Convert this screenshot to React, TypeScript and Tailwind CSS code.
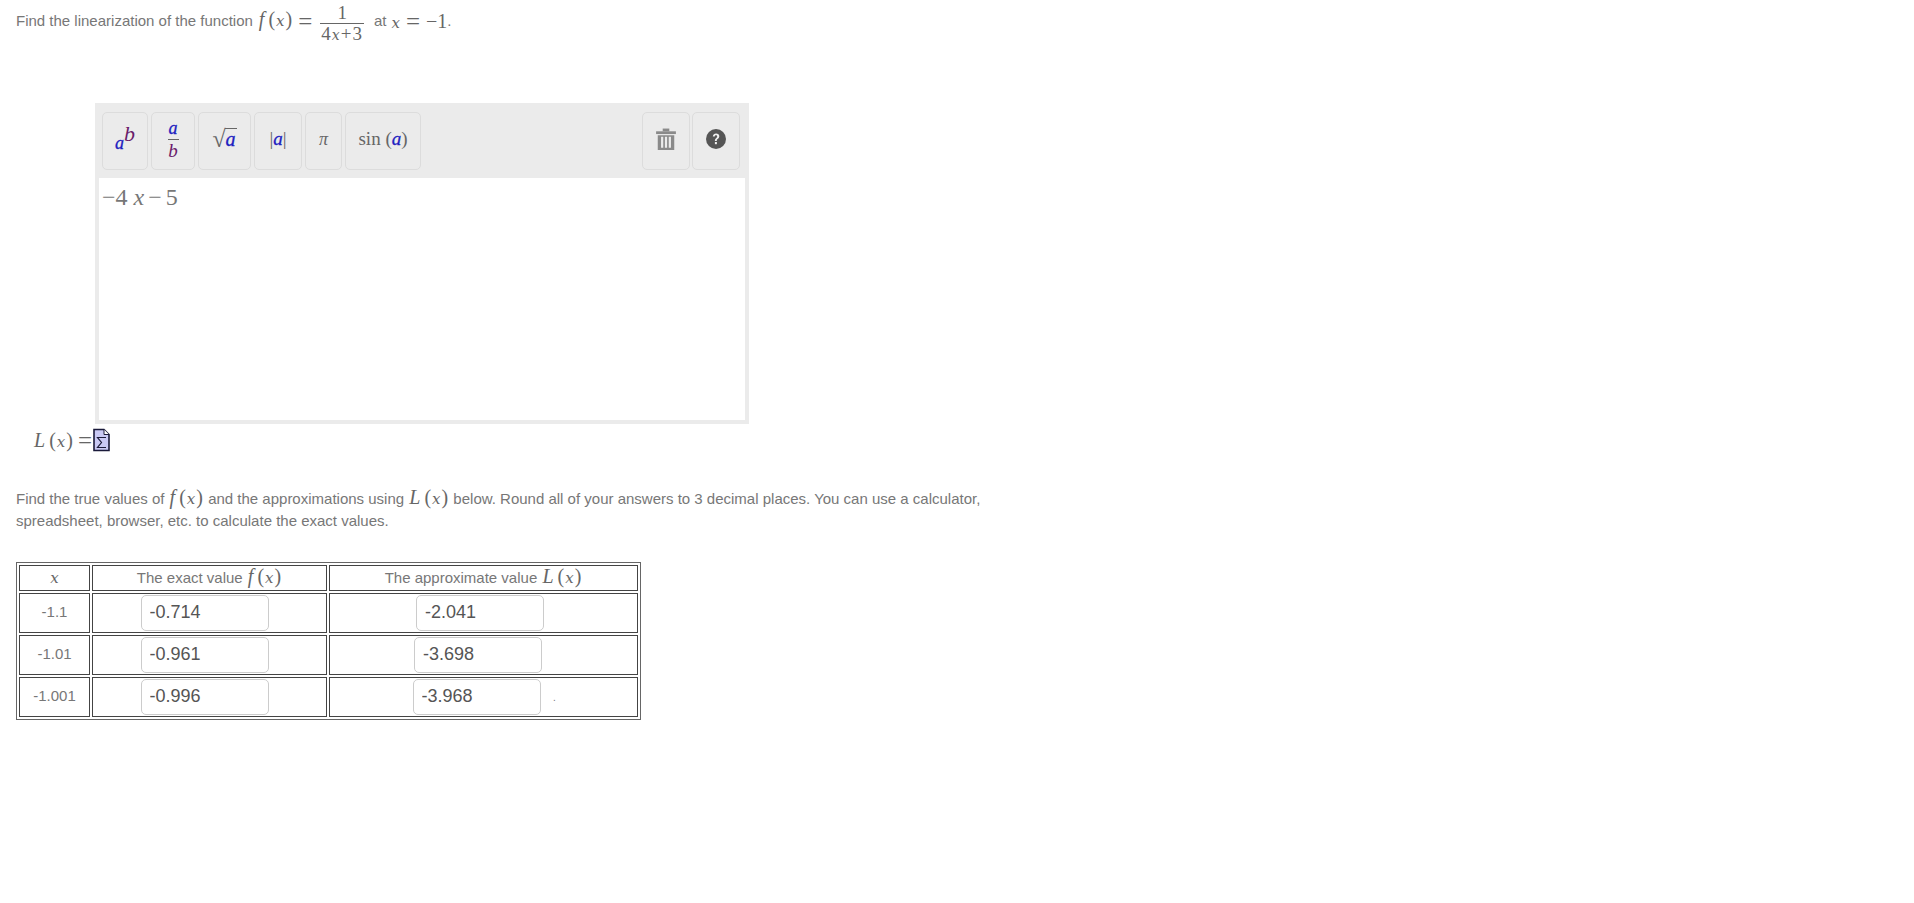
import React from 'react';

const mathFont = "font-['Liberation_Serif','Times_New_Roman',serif]";

const MathText: React.FC<{ children: React.ReactNode; className?: string }> = ({ children, className = '' }) => (
    <span className={`${mathFont} text-[20px] leading-none text-[#666] ${className}`}>{children}</span>
);

const X: React.FC<{ className?: string }> = ({ className = 'text-[15px]' }) => (
    <i className={`font-['DejaVu_Serif',serif] ${className}`}>x</i>
);

const Equals: React.FC<{ className?: string }> = ({ className = '' }) => (
    <span className={`${mathFont} text-[25px] leading-none text-[#666] ${className}`}>=</span>
);

const Fx: React.FC<{ name: string }> = ({ name }) => (
    <MathText className="mx-[1px]">
        <i>{name}</i>
        <span className="ml-[4px]">(</span>
        <span className="mx-[1px]"><X /></span>
        <span>)</span>
    </MathText>
);

const A = () => <i className="text-[#2020c0] [-webkit-text-stroke:0.3px_#2020c0]">a</i>;

const ToolButton: React.FC<{ className: string; children: React.ReactNode }> = ({ className, children }) => (
    <button className={`h-[58px] rounded-[5px] border border-[#dcdcdc] bg-[#ebebeb] flex items-center justify-center pb-[4px] ${mathFont} text-[#666] ${className}`}>
        {children}
    </button>
);

const TrashIcon = () => (
    <svg width="20" height="22" viewBox="0 0 18 20" fill="#8a8a8a">
        <path d="M0 3h18v2.5H0z" />
        <path d="M6 .5h6V3H6z" />
        <path d="M1.5 6.5h15V20h-15zM4.5 8v10h2V8zM8 8v10h2V8zM11.5 8v10h2V8z" fillRule="evenodd" />
    </svg>
);

const HelpIcon = () => (
    <svg width="20" height="20" viewBox="0 0 20 20">
        <circle cx="10" cy="10" r="10" fill="#555" />
        <path d="M6.8 7.6C7 5.5 8.4 4.6 10.1 4.6c1.9 0 3.2 1.1 3.2 2.7 0 2.4-2.5 2.4-2.5 4.6H8.9c0-3 2.3-3 2.3-4.5 0-.7-.5-1.1-1.2-1.1-.8 0-1.2.5-1.3 1.3z" fill="#eee" />
        <rect x="8.9" y="13" width="2" height="2.2" fill="#eee" />
    </svg>
);

const DocIcon = () => (
    <svg width="17" height="24" viewBox="0 0 17 23">
        <path d="M1 1h10l5 5v16H1z" fill="#c9c9f5" stroke="#1a1a3a" strokeWidth="1.6" />
        <path d="M11 1v5h5" fill="#fff" stroke="#1a1a3a" strokeWidth="1" />
        <path d="M13 9H4.5l4 5-4 5H13" fill="none" stroke="#1a1a3a" strokeWidth="1.2" />
    </svg>
);

const cell = 'border border-[#444] p-0 text-center align-middle';

const rows = [
    { x: '-1.1', exact: '-0.714', approx: '-2.041', trail: 'w-[7px]', dot: false },
    { x: '-1.01', exact: '-0.961', approx: '-3.698', trail: 'w-[11px]', dot: false },
    { x: '-1.001', exact: '-0.996', approx: '-3.968', trail: 'w-[14px]', dot: true },
];

const AnswerInput: React.FC<{ value: string }> = ({ value }) => (
    <input
        readOnly
        value={value}
        className="block w-[128px] h-[36px] rounded-[5px] border border-[#ccc] px-[8px] text-[18px] text-[#555] outline-none"
    />
);

export default function App() {
    return (
        <div className="min-h-[903px] bg-white pl-4 pt-[3px] font-['Liberation_Sans',Arial,sans-serif] text-[15px] text-[#777]">
            <div className="flex items-center h-[36px]">
                <span>Find the linearization of the function</span>
                <span className="ml-[5px]"><Fx name="f" /></span>
                <Equals className="mx-[5px]" />
                <span className={`inline-flex flex-col items-center mx-[3px] mt-[5px] ${mathFont} text-[19px] leading-[20px] text-[#666]`}>
                    <span>1</span>
                    <span className="border-t border-[#666] px-[1px] tracking-[1px]">4<X className="text-[14px]" />+3</span>
                </span>
                <span className="ml-[7px]">at</span>
                <MathText className="ml-[5px]"><X /></MathText>
                <Equals className="mx-[6px]" />
                <MathText>−1</MathText>
                <span>.</span>
            </div>

            <div className="mt-[64px] ml-[79px] w-[654px] h-[321px] flex flex-col bg-[#ebebeb] px-[4px] pb-[4px]">
                <div className="h-[75px] flex items-start pt-[9px] pl-[3px] pr-[5px] gap-[3px]">
                    <ToolButton className="w-[46px] text-[18px]">
                        <span className="mt-2"><A /></span>
                        <i className="text-[22px] text-[#6a1b6a] -mt-3">b</i>
                    </ToolButton>
                    <ToolButton className="w-[44px] text-[18px] flex-col leading-[18px]">
                        <A />
                        <span className="border-t border-[#666] w-[11px] my-[2px]" />
                        <i className="text-[19px] text-[#6a1b6a]">b</i>
                    </ToolButton>
                    <ToolButton className="w-[53px] text-[20px]">
                        <span className="text-[24px] leading-none">√</span>
                        <span className="border-t border-[#666] px-[1px] -ml-[1px] leading-[20px] -mt-[2px]"><A /></span>
                    </ToolButton>
                    <ToolButton className="w-[48px] text-[19px]">
                        |<A />|
                    </ToolButton>
                    <ToolButton className="w-[37px] text-[18px]">
                        <i>π</i>
                    </ToolButton>
                    <ToolButton className="w-[76px] text-[19px]">
                        sin&nbsp;(<A />)
                    </ToolButton>
                    <div className="ml-auto flex gap-[2px]">
                        <ToolButton className="w-[48px]"><TrashIcon /></ToolButton>
                        <ToolButton className="w-[48px]"><HelpIcon /></ToolButton>
                    </div>
                </div>
                <div className={`flex-1 bg-white pl-[3px] pt-[4px] ${mathFont} text-[24px] leading-[30px] text-[#777]`}>
                    −4 <i>x</i> <span className="-mx-[2px]">−</span> 5
                </div>
            </div>

            <div className="mt-[3px] ml-[17px] flex items-center h-[26px]">
                <Fx name="L" />
                <Equals className="ml-[4px] mr-[1px]" />
                <DocIcon />
            </div>

            <div className="mt-[34px] leading-[22px]">
                <div>
                    Find the true values of <Fx name="f" /> and the approximations using <Fx name="L" /> below. Round all of your answers to 3 decimal places. You can use a calculator,
                </div>
                <div>spreadsheet, browser, etc. to calculate the exact values.</div>
            </div>

            <table className="mt-[30px] w-[625px] table-fixed border-separate border-spacing-[2px] border border-[#666]">
                <colgroup>
                    <col className="w-[71px]" />
                    <col className="w-[235px]" />
                    <col className="w-[309px]" />
                </colgroup>
                <thead>
                    <tr className="h-[25px]">
                        <th className={`${cell} font-normal`}><MathText><X /></MathText></th>
                        <th className={`${cell} font-normal`}>The exact value <Fx name="f" /></th>
                        <th className={`${cell} font-normal`}>The approximate value <Fx name="L" /></th>
                    </tr>
                </thead>
                <tbody>
                    {rows.map(row => (
                        <tr key={row.x}>
                            <td className={cell}>{row.x}</td>
                            <td className={cell}>
                                <div className="flex justify-center py-[1px]">
                                    <AnswerInput value={row.exact} />
                                    <span className="w-[10px]" />
                                </div>
                            </td>
                            <td className={cell}>
                                <div className="relative flex justify-center py-[1px]">
                                    <AnswerInput value={row.approx} />
                                    <span className={row.trail} />
                                    {row.dot && <span className="absolute left-[223px] top-[12px] text-[10px]">.</span>}
                                </div>
                            </td>
                        </tr>
                    ))}
                </tbody>
            </table>
        </div>
    );
}
